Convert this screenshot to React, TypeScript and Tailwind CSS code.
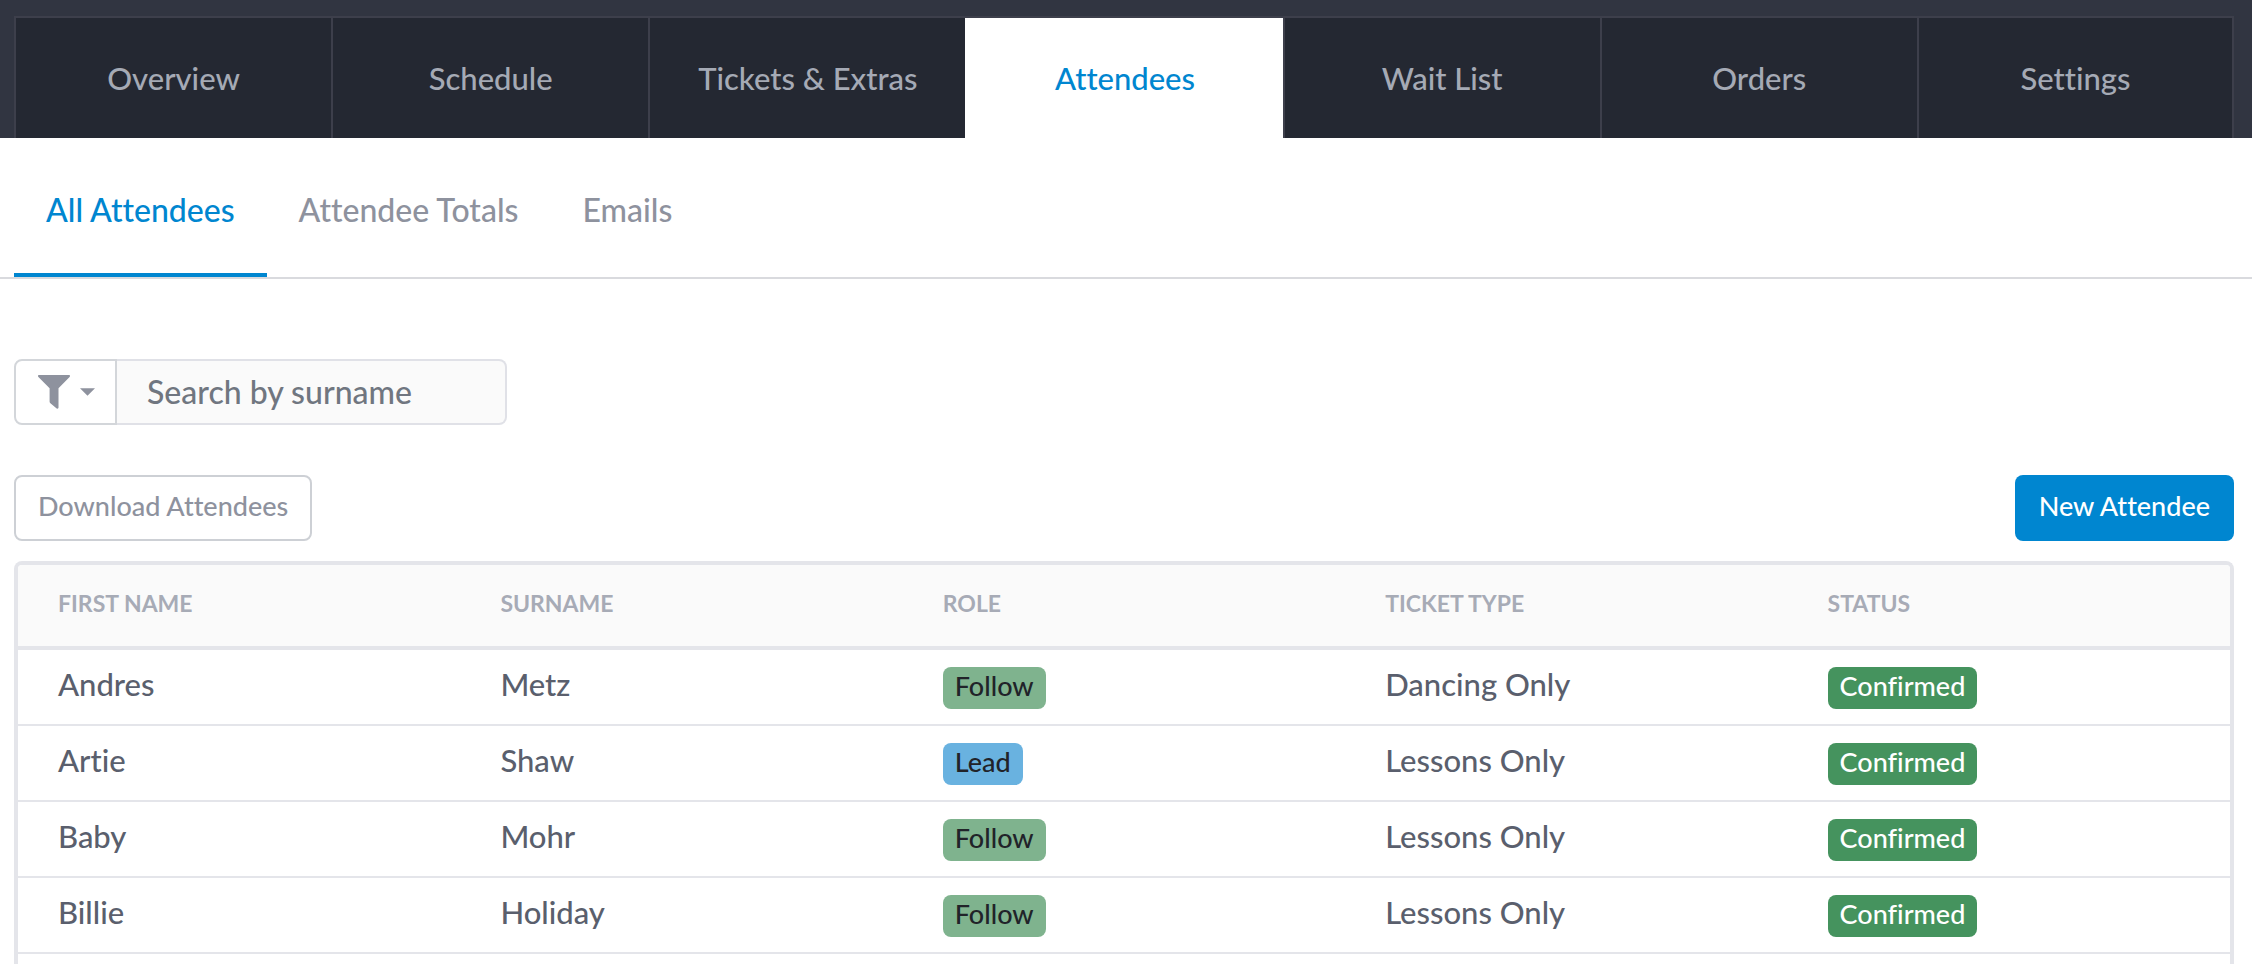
import { useState } from 'react'

const tabs = ['Overview', 'Schedule', 'Tickets & Extras', 'Attendees', 'Wait List', 'Orders', 'Settings']
const subTabs = ['All Attendees', 'Attendee Totals', 'Emails']
const columns = ['First name', 'Surname', 'Role', 'Ticket type', 'Status']

type Attendee = {
  firstName: string
  surname: string
  role: 'Follow' | 'Lead'
  ticketType: string
  status: string
}

const attendees: Attendee[] = [
  { firstName: 'Andres', surname: 'Metz', role: 'Follow', ticketType: 'Dancing Only', status: 'Confirmed' },
  { firstName: 'Artie', surname: 'Shaw', role: 'Lead', ticketType: 'Lessons Only', status: 'Confirmed' },
  { firstName: 'Baby', surname: 'Mohr', role: 'Follow', ticketType: 'Lessons Only', status: 'Confirmed' },
  { firstName: 'Billie', surname: 'Holiday', role: 'Follow', ticketType: 'Lessons Only', status: 'Confirmed' }
]

function Badge({ label, className }: { label: string; className: string }) {
  return (
    <span className={`block w-fit h-[42px] px-3 rounded-lg text-[27px] leading-[38px] ${className}`}>
      {label}
    </span>
  )
}

export default function App() {
  const [activeTab, setActiveTab] = useState('Attendees')
  const [activeSubTab, setActiveSubTab] = useState('All Attendees')
  const [search, setSearch] = useState('')

  const rows = attendees.filter((a) => a.surname.toLowerCase().startsWith(search.toLowerCase()))

  return (
    <div className="min-h-screen flex flex-col bg-white text-[31px] leading-9 font-medium font-['Lato',sans-serif] [font-variant-ligatures:none]">
      <header className="bg-[#313541] pt-4 pl-3.5 pr-[18px]">
        <nav className="grid grid-cols-7 border-t-2 border-[#3d3f4b] bg-[#242832]">
          {tabs.map((tab) => (
            <a
              key={tab}
              href="#"
              onClick={() => setActiveTab(tab)}
              className={`h-[120px] flex items-center justify-center border-l-2 last:border-r-2 ${tab === activeTab ? 'bg-white text-[#0086d0] border-white' : 'text-[#a5aab5] border-[#3d3f4b]'}`}
            >
              {tab}
            </a>
          ))}
        </nav>
      </header>

      <nav className="flex pl-3.5 border-b-2 border-[#d9dade] text-[32px]">
        {subTabs.map((tab) => (
          <a
            key={tab}
            href="#"
            onClick={() => setActiveSubTab(tab)}
            className={`h-[139px] px-8 pt-[54px] border-b-4 ${tab === activeSubTab ? 'text-[#0086d0] border-[#0086d0]' : 'text-[#8e929e] border-transparent'}`}
          >
            {tab}
          </a>
        ))}
      </nav>

      <main className="flex-1 flex flex-col pt-20 pl-3.5 pr-[18px]">
        <div className="flex h-[66px]">
          <button
            type="button"
            aria-label="Filter"
            className="w-[103px] flex items-center gap-2.5 pl-[22px] border-2 border-[#d3d6da] rounded-l-lg text-[#8e929e]"
          >
            <svg width="32" height="34" viewBox="0 0 32 34" fill="currentColor">
              <path d="M1 0h30c1 0 1.300 1.200.6 1.900L20.500 13.300v19.200c0 1-1 1.500-1.800.9l-6.300-5.200c-.5-.4-.8-.9-.8-1.500V13.300L.4 1.900C-.3 1.200 0 0 1 0z" />
            </svg>
            <svg width="15" height="8" viewBox="0 0 16 8" fill="currentColor">
              <path d="M0 0h16L8 8z" />
            </svg>
          </button>
          <input
            type="text"
            aria-label="Search by surname"
            placeholder="Search by surname"
            value={search}
            onChange={(e) => setSearch(e.target.value)}
            className="w-[390px] px-[30px] border-2 border-l-0 border-[#e0e1e7] rounded-r-lg bg-[#fafafa] text-[32px] text-[#5a5f6d] placeholder:text-[#707680] focus:outline-none"
          />
        </div>

        <div className="mt-[50px] flex justify-between text-[27px]">
          <button type="button" className="h-[66px] px-[22px] pb-1 border-2 border-[#cdd0d5] rounded-lg text-[#8e929e]">
            Download Attendees
          </button>
          <button type="button" className="h-[66px] px-6 pb-1 rounded-lg bg-[#0086d0] text-white">
            New Attendee
          </button>
        </div>

        <div className="mt-5 flex-1 border-4 border-b-0 border-[#e4e5ea] rounded-t-lg overflow-hidden">
          <table className="w-full table-fixed border-separate border-spacing-0 text-left text-[#5a5f6d]">
            <thead className="bg-[#fafafa] text-[#a7abb6] text-[23px]">
              <tr>
                {columns.map((column) => (
                  <th key={column} className="h-[85px] pl-10 pb-1.5 border-b-4 border-[#e4e5ea] font-bold uppercase">
                    {column}
                  </th>
                ))}
              </tr>
            </thead>
            <tbody className="[&_td]:h-[76px] [&_td]:pl-10 [&_td]:border-b-2 [&_td]:border-[#e4e5ea]">
              {rows.map((a) => (
                <tr key={`${a.firstName} ${a.surname}`}>
                  <td className="pb-1.5">{a.firstName}</td>
                  <td className="pb-1.5">{a.surname}</td>
                  <td className="pt-0.5">
                    <Badge
                      label={a.role}
                      className={a.role === 'Follow' ? 'bg-[#7fb38e] text-[#212329]' : 'bg-[#69b2e0] text-[#212329]'}
                    />
                  </td>
                  <td className="pb-1.5">{a.ticketType}</td>
                  <td className="pt-0.5">
                    <Badge label={a.status} className="bg-[#45935e] text-white" />
                  </td>
                </tr>
              ))}
            </tbody>
          </table>
        </div>
      </main>
    </div>
  )
}
